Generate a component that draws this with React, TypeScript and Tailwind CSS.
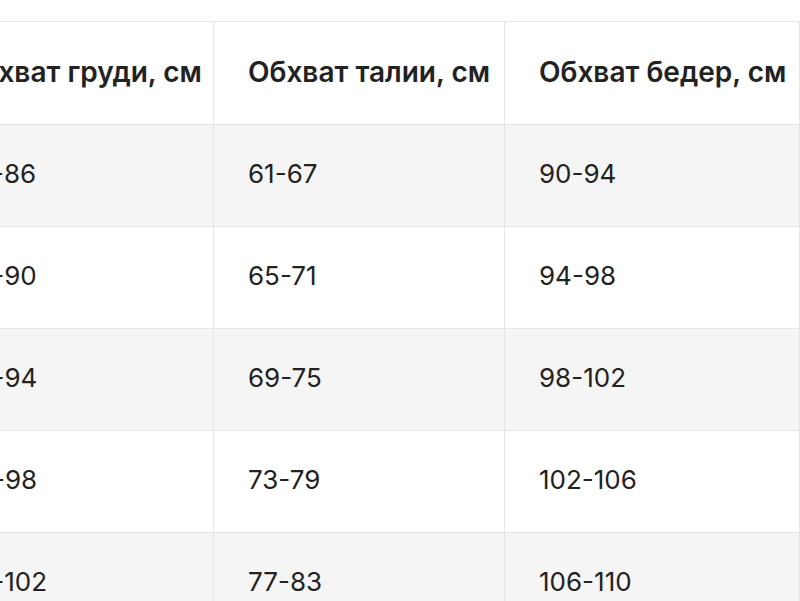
import React from 'react';

const rows = [
  ['82-86', '61-67', '90-94'],
  ['86-90', '65-71', '94-98'],
  ['90-94', '69-75', '98-102'],
  ['94-98', '73-79', '102-106'],
  ['98-102', '77-83', '106-110'],
];

const headers = ['Обхват груди, см', 'Обхват талии, см', 'Обхват бедер, см'];

export default function App() {
  return (
    <div
      className="w-[800px] h-[601px] overflow-hidden bg-white pt-[21px] text-[#222222]"
      style={{ fontFamily: 'Inter, "Noto Sans", sans-serif' }}
    >
      {/* size table, scrolled so the first column is partly hidden */}
      <table className="-ml-[75px] border-collapse table-fixed w-[874px]">
        <colgroup>
          <col className="w-[288px]" />
          <col className="w-[291px]" />
          <col className="w-[295px]" />
        </colgroup>
        <thead>
          <tr className="h-[103px]">
            {headers.map((h) => (
              <th
                key={h}
                className="border border-[#e6e6e6] pl-[34px] pb-[2px] text-left text-[28px] font-semibold whitespace-nowrap"
              >
                {h}
              </th>
            ))}
          </tr>
        </thead>
        <tbody>
          {rows.map((r, i) => (
            <tr key={i} className={`h-[102px] ${i % 2 === 0 ? 'bg-[#f5f5f5]' : 'bg-white'}`}>
              {r.map((c, j) => (
                <td
                  key={j}
                  className="border border-[#e6e6e6] pl-[34px] pb-[4px] text-left text-[26px] whitespace-nowrap"
                >
                  {c}
                </td>
              ))}
            </tr>
          ))}
        </tbody>
      </table>
    </div>
  );
}
